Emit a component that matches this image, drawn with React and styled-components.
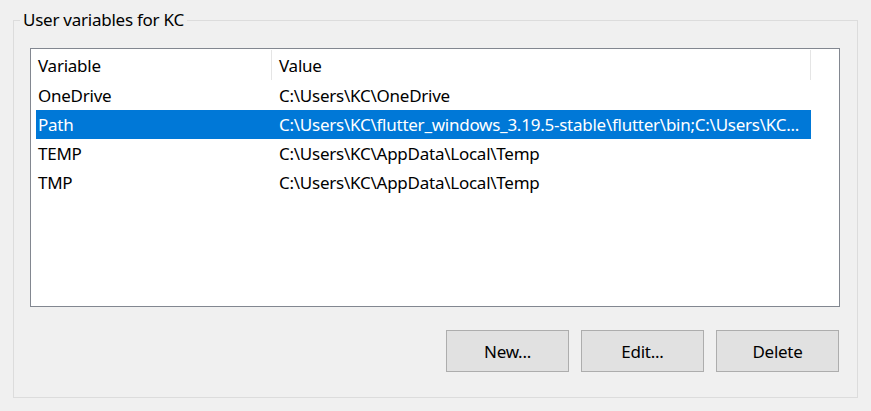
import React from 'react'
import styled, { createGlobalStyle } from 'styled-components'

const GlobalStyle = createGlobalStyle`
  html, body {
    margin: 0;
    padding: 0;
    background: #f0f0f0;
  }
  body {
    width: 871px;
    height: 411px;
    overflow: hidden;
    font-family: "Noto Sans", "Open Sans", sans-serif;
    font-size: 17px;
    letter-spacing: -0.25px;
    color: #000;
  }
`

const Group = styled.fieldset`
  margin: 8px 13px 0 13px;
  padding: 0;
  border: 1px solid #dcdcdc;
  min-width: 0;
`

const Legend = styled.legend`
  margin-left: 6px;
  padding: 0 3px;
  line-height: 24px;
`

const Inner = styled.div`
  padding: 16px 17px 25px 16px;
  display: flex;
  flex-direction: column;
`

const ListBox = styled.div`
  height: 257px;
  border: 1px solid #828790;
  background: #fff;
  padding-left: 5px;
  overflow: hidden;
`

const Row = styled.div`
  display: grid;
  grid-template-columns: 236px 539px;
  height: ${p => (p.$header ? '32px' : '29px')};
  line-height: 29px;
  background: ${p => (p.$selected ? '#0078d7' : 'transparent')};
  color: ${p => (p.$selected ? '#fff' : '#000')};
  width: 775px;
`

const Cell = styled.div`
  padding-left: ${p => (p.$first ? '2px' : '7px')};
  padding-top: ${p => (p.$header ? '2px' : '0')};
  white-space: nowrap;
  overflow: hidden;
  position: relative;

  ${p =>
    p.$header &&
    `
    &::after {
      content: '';
      position: absolute;
      right: 0;
      top: 1px;
      bottom: 1px;
      width: 1px;
      background: #e5e5e5;
    }
  `}
`

const Buttons = styled.div`
  display: flex;
  justify-content: flex-end;
  gap: 12px;
  margin-top: 23px;
  margin-right: 1px;
`

const Button = styled.button`
  width: 123px;
  height: 42px;
  box-sizing: border-box;
  background: #e1e1e1;
  border: 1px solid #adadad;
  font-family: inherit;
  font-size: 17px;
  letter-spacing: -0.25px;
  color: #000;
  padding: 0;
`

const rows = [
  ['OneDrive', 'C:\\Users\\KC\\OneDrive'],
  ['Path', 'C:\\Users\\KC\\flutter_windows_3.19.5-stable\\flutter\\bin;C:\\Users\\KC...', true],
  ['TEMP', 'C:\\Users\\KC\\AppData\\Local\\Temp'],
  ['TMP', 'C:\\Users\\KC\\AppData\\Local\\Temp'],
]

export default function App() {
  return (
    <>
      <GlobalStyle />
      <Group>
        <Legend>User variables for KC</Legend>
        <Inner>
          <ListBox>
            <Row $header>
              <Cell $first $header>Variable</Cell>
              <Cell $header>Value</Cell>
            </Row>
            {rows.map(([name, value, selected]) => (
              <Row key={name} $selected={selected}>
                <Cell $first>{name}</Cell>
                <Cell>{value}</Cell>
              </Row>
            ))}
          </ListBox>
          <Buttons>
            <Button>New...</Button>
            <Button>Edit...</Button>
            <Button>Delete</Button>
          </Buttons>
        </Inner>
      </Group>
    </>
  )
}
